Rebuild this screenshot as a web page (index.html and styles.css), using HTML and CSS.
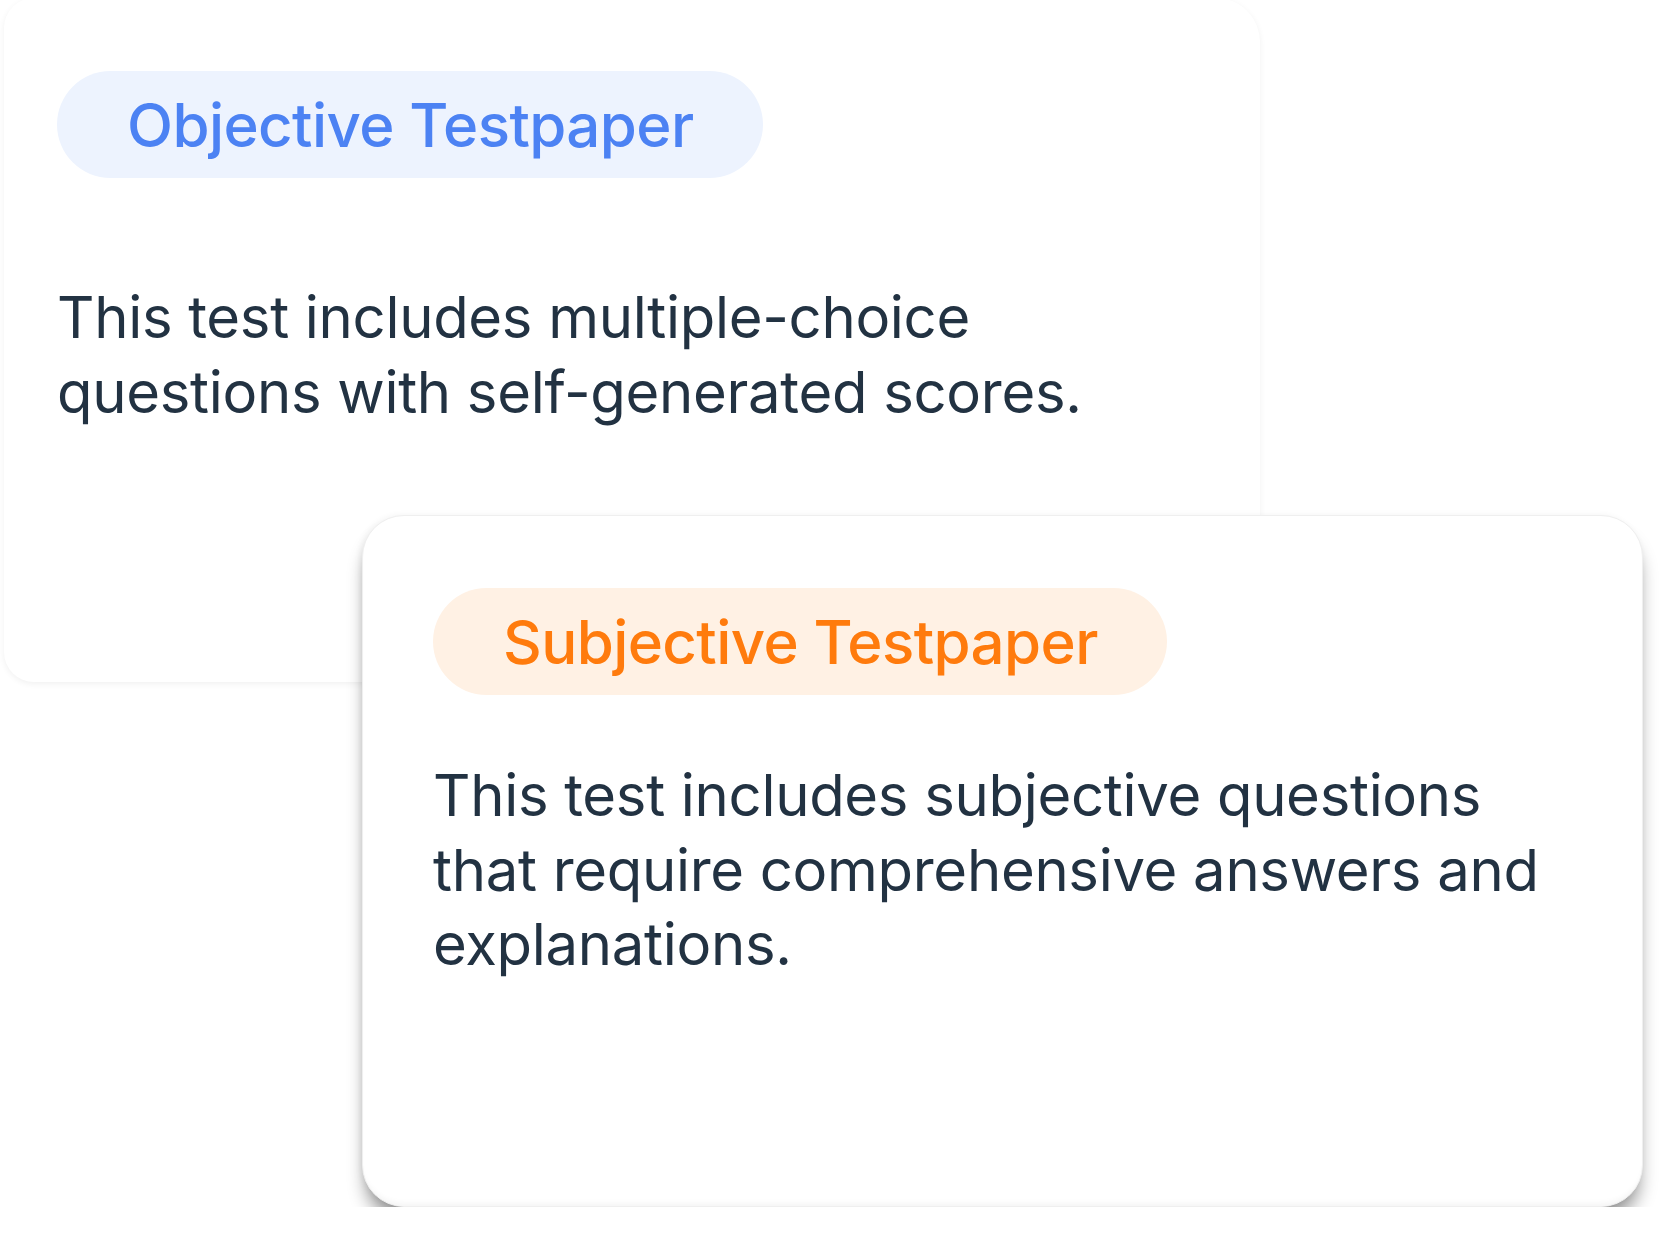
FILE: index.html
```html
<!DOCTYPE html>
<html lang="en">
<head>
  <meta charset="UTF-8" />
  <meta name="viewport" content="width=device-width, initial-scale=1.0"/>
  <title>Testpaper types</title>
  <link rel="stylesheet" href="styles.css">
</head>
<body>
  <main class="stack">
    <section class="card card-back">
      <span class="tag tag-blue">Objective Testpaper</span>
      <p class="desc desc-back">This test includes multiple-choice questions with self-generated scores.</p>
    </section>

    <section class="card card-front">
      <span class="tag tag-orange">Subjective Testpaper</span>
      <p class="desc desc-front">This test includes subjective questions that require comprehensive answers and explanations.</p>
    </section>
  </main>
</body>
</html>
```

FILE: styles.css
```css
body {
  margin: 0;
  padding: 0;
  background: #fff;
  font-family: Inter, "Noto Sans", sans-serif;
  overflow: hidden;
}
.stack {
  display: flex;
  flex-direction: column;
  align-items: flex-start;
}
.card {
  box-sizing: border-box;
  background: #fff;
  display: flex;
  flex-direction: column;
  align-items: flex-start;
}
.card-back {
  width: 1256px;
  height: 684px;
  margin: -2px 0 0 4px;
  padding: 73px 53px 0;
  border-radius: 30px 44px 30px 30px;
  box-shadow: 0 2px 6px rgba(0,0,0,0.06);
}
.card-front {
  width: 1281px;
  height: 692px;
  margin: -167px 0 0 362px;
  padding: 72px 70px 0;
  border-radius: 42px;
  border: 1px solid #efefef;
  box-shadow: 0 16px 18px -4px rgba(0,0,0,0.42), -2px 0 6px rgba(0,0,0,0.05), inset 0 -6px 6px -4px rgba(0,0,0,0.05);
  position: relative;
}
.tag {
  display: inline-flex;
  align-items: center;
  height: 107px;
  padding: 0 69px 0 70px;
  border-radius: 54px;
  font-size: 60px;
  font-weight: 500;
  letter-spacing: -0.6px;
}
.tag-blue {
  background: #edf3fe;
  color: #4c82f3;
}
.tag-orange {
  background: #fff1e4;
  color: #ff7b0d;
}
.desc {
  margin: 0;
  max-width: 1120px;
  font-size: 58px;
  line-height: 74.5px;
  color: #223242;
  letter-spacing: -0.3px;
}
.desc-back {
  margin-top: 102px;
}
.desc-front {
  margin-top: 63px;
}
```
